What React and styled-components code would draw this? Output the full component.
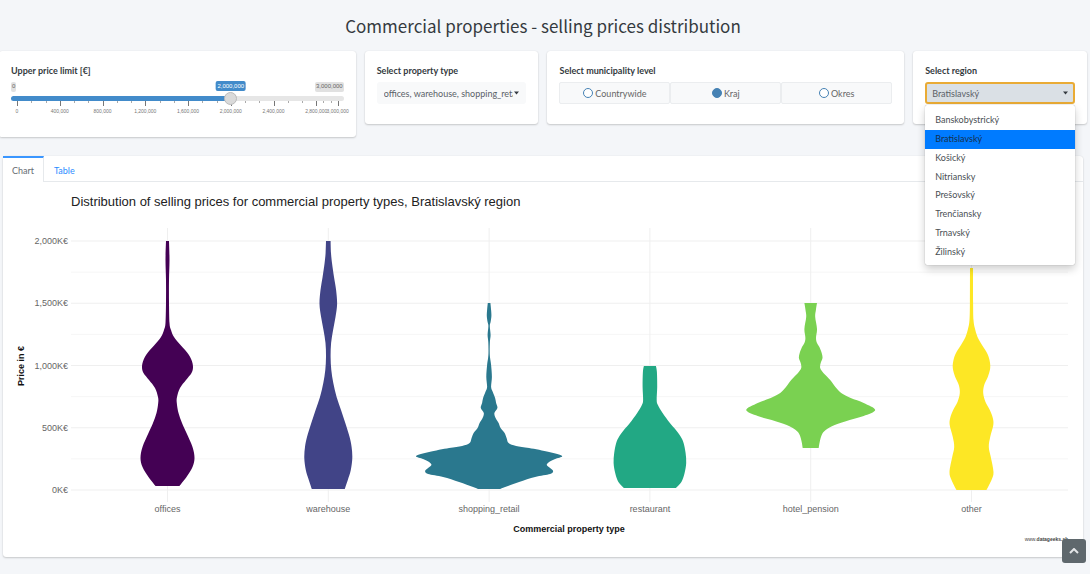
import React from "react";
import styled, { createGlobalStyle } from "styled-components";
import { useState } from "react";

const GlobalStyle = createGlobalStyle`
  * {
    box-sizing: border-box;
  }

  body {
    margin: 0;
    min-height: 100vh;
    overflow-x: hidden;
    background: #f4f6f9;
    color: #343a40;
    font-family: Lato, "Noto Sans", sans-serif;
    font-size: 9px;
  }

  button,
  select,
  input {
    margin: 0;
    font: inherit;
    color: inherit;
  }
`;

const Page = styled.main`
  padding-bottom: 16px;
`;

const PageTitle = styled.h1`
  margin: 0;
  padding: 11px 4px 10px 0;
  font-family: "Noto Sans CJK SC", "Noto Sans", sans-serif;
  font-size: 17px;
  font-weight: 400;
  line-height: 30px;
  text-align: center;
`;

const Filters = styled.section`
  display: grid;
  grid-template-columns: repeat(12, 1fr);
  column-gap: 9px;
  align-items: start;
  margin: 0 3px 19px -1px;
`;

const Card = styled.div`
  grid-column: span ${(props) => props.$span};
  min-width: 0;
  padding: 11px 12px 20px;
  background: #fff;
  border-radius: 3px;
  box-shadow: 0 0 1px rgba(0, 0, 0, 0.12), 0 1px 2px rgba(0, 0, 0, 0.18);
`;

const FieldLabel = styled.label`
  display: block;
  margin-bottom: 2px;
  font-weight: 700;
  line-height: 18px;
`;

const SliderHead = styled.div`
  position: relative;
  display: flex;
  justify-content: space-between;
  height: 10px;
`;

const SliderBadge = styled.span`
  padding: 0 1px;
  background: #e1e1e1;
  border-radius: 2px;
  color: #666;
  font-family: "Liberation Sans", Arial, sans-serif;
  font-size: 6px;
  line-height: 9px;
`;

const SliderValue = styled(SliderBadge)`
  position: absolute;
  top: -1px;
  transform: translateX(-50%);
  padding: 0 2px;
  background: #428bca;
  color: #fff;
  line-height: 10px;
`;

const Range = styled.input`
  display: block;
  position: relative;
  z-index: 1;
  width: 100%;
  height: 13px;
  appearance: none;
  background: transparent;

  &::-webkit-slider-runnable-track {
    height: 5px;
    border-radius: 3px;
    background: linear-gradient(
      to right,
      #428bca ${(props) => props.$filled}%,
      #e6e6e6 ${(props) => props.$filled}%
    );
  }

  &::-webkit-slider-thumb {
    appearance: none;
    width: 13px;
    height: 13px;
    margin-top: -4px;
    border: 1px solid #bbb;
    border-radius: 50%;
    background: #dadada;
  }
`;

const Scale = styled.div`
  display: flex;
  height: 16px;
  margin: -4px 6px 0;
`;

const ScaleStep = styled.div`
  flex: ${(props) => props.$size} 0 0;
  min-width: 0;
`;

const Marks = styled.div`
  display: grid;
  grid-template-columns: repeat(3, 1fr);
  height: 5px;
`;

const Mark = styled.i`
  height: ${(props) => (props.$major ? 5 : 2)}px;
  border-left: 1px solid ${(props) => (props.$major ? "#777" : "#aaa")};
`;

const ScaleLabel = styled.span`
  display: flex;
  justify-content: center;
  width: 0;
  color: #777;
  font-family: "Liberation Sans", Arial, sans-serif;
  font-size: 5px;
  line-height: 10px;
  white-space: nowrap;
`;

const SelectWrap = styled.div`
  position: relative;
`;

const Select = styled.select`
  display: block;
  width: 100%;
  height: 22px;
  padding: 0 13px 0 ${(props) => (props.$open ? 5 : 7)}px;
  appearance: none;
  border: ${(props) => (props.$open ? "2px solid #e9ab35" : "0")};
  border-radius: 3px;
  outline: 0;
  background: ${(props) => (props.$open ? "#dae0e5" : "#f8f9fa")};
  color: #5a6168;
`;

const Caret = styled.svg`
  position: absolute;
  top: 9px;
  right: 7px;
  width: 5px;
  height: 4px;
  pointer-events: none;
`;

const Menu = styled.ul`
  position: absolute;
  z-index: 10;
  top: 23px;
  left: 0;
  right: 0;
  display: grid;
  grid-auto-rows: 1fr;
  height: 160px;
  margin: 0;
  padding: 6px 0 4px;
  list-style: none;
  background: #fff;
  border-radius: 2px;
  box-shadow: 0 0 1px rgba(0, 0, 0, 0.4), 0 4px 8px rgba(0, 0, 0, 0.2);
`;

const MenuItem = styled.li`
  display: flex;
  align-items: center;
  padding: 0 10px;
  background: ${(props) => (props.$active ? "#007bff" : "transparent")};
  color: ${(props) => (props.$active ? "#16304d" : "#4a4f54")};
  line-height: 12px;
`;

const RadioGroup = styled.div`
  display: grid;
  grid-template-columns: repeat(3, 1fr);
`;

const RadioButton = styled.label`
  display: flex;
  align-items: center;
  justify-content: center;
  gap: 2px;
  height: 22px;
  border: 1px solid #ebedef;
  border-radius: 2px;
  background: #f8f9fa;
  color: #666;
`;

const Radio = styled.input`
  width: 10px;
  height: 10px;
  appearance: none;
  border: 1px solid #4682b4;
  border-radius: 50%;
  background: #fff;

  &:checked {
    background: #4682b4;
  }
`;

const Panel = styled.section`
  margin: 0 7px 0 3px;
  background: #fff;
  border-radius: 3px;
  box-shadow: 0 0 1px rgba(0, 0, 0, 0.12), 0 1px 2px rgba(0, 0, 0, 0.18);
`;

const Tabs = styled.div`
  display: flex;
  height: 26px;
  border-bottom: 1px solid #e6e9ec;
`;

const Tab = styled.button`
  height: 26px;
  padding: 0 ${(props) => (props.$active ? 9 : 10)}px;
  border: 0;
  border-top: 2px solid ${(props) => (props.$active ? "#3a96ff" : "transparent")};
  border-right: 1px solid ${(props) => (props.$active ? "#e6e9ec" : "transparent")};
  background: ${(props) => (props.$active ? "#fff" : "transparent")};
  color: ${(props) => (props.$active ? "#666c72" : "#2b8cff")};
`;

const Chart = styled.svg`
  display: block;
  width: 100%;
  font-family: "Liberation Sans", Arial, sans-serif;
`;

const TopButton = styled.button`
  position: fixed;
  right: 4px;
  bottom: 11px;
  display: grid;
  place-items: center;
  width: 24px;
  height: 24px;
  padding: 0;
  border: 0;
  border-radius: 3px;
  background: #5f686d;
  color: #e4e6e8;
`;

const MAX_PRICE = 3000000;
const STEPS = [0, 400000, 800000, 1200000, 1600000, 2000000, 2400000, 2800000];
const LEVELS = ["Countrywide", "Kraj", "Okres"];
const REGIONS = [
  "Banskobystrický",
  "Bratislavský",
  "Košický",
  "Nitriansky",
  "Prešovský",
  "Trenčiansky",
  "Trnavský",
  "Žilinský",
];

// each profile point is [height above the zero line, half width]
const VIOLINS = [
  {
    name: "offices",
    color: "#440154",
    profile: [
      [249, 1.5], [230, 2], [210, 1.5], [187, 1.5], [167, 2], [160, 3.5],
      [153, 6.5], [145, 13], [137, 20], [130, 24], [123, 25.5], [117, 24],
      [110, 18.5], [102, 12.5], [93, 9.5], [87, 9.3], [77, 11], [67, 14.5],
      [57, 19], [43, 25], [32, 27], [23, 25], [13, 19], [4, 12],
    ],
  },
  {
    name: "warehouse",
    color: "#414487",
    profile: [
      [249, 2.3], [237, 2.7], [227, 3.7], [213, 5.7], [200, 7.8], [186, 8.8],
      [173, 7.2], [160, 4.8], [147, 2.8], [133, 2.3], [120, 3], [107, 5],
      [93, 8.3], [80, 12.7], [67, 17], [53, 21.3], [43, 23.3], [32, 24],
      [20, 22.5], [10, 19.5], [1, 16.5],
    ],
  },
  {
    name: "shopping_retail",
    color: "#2a788e",
    profile: [
      [187, 1.3], [180, 2], [174, 2.3], [168, 1.5], [164, 0.7], [155, 1.5],
      [148, 0.8], [138, 0.6], [132, 1], [125, 2], [113, 2.8], [103, 2],
      [98, 3.7], [92, 6], [87, 7], [82, 8.3], [77, 5.3], [72, 6.5],
      [67, 9.5], [62, 11.5], [57, 15.5], [52, 17.5], [47, 19.5], [44, 27],
      [42, 40], [38, 60], [34, 73], [31, 66], [28, 60], [25, 57.7],
      [22, 61], [19, 64], [16, 61], [13, 46], [8, 30], [3, 16], [1, 11],
    ],
  },
  {
    name: "restaurant",
    color: "#22a884",
    profile: [
      [124, 6], [118, 7], [103, 7.3], [90, 6.8], [85, 8], [77, 12.7],
      [67, 20], [60, 26], [53, 31], [47, 33.7], [37, 35.7], [27, 36.3],
      [17, 34.7], [8, 31.5], [2, 26],
    ],
  },
  {
    name: "hotel_pension",
    color: "#7ad151",
    profile: [
      [187, 6.3], [180, 5.2], [173, 4.5], [161, 6.3], [152, 5.3], [147, 6.3],
      [143, 8.7], [137, 11], [132, 11.8], [127, 10], [122, 9.5], [117, 12.7],
      [110, 19.5], [103, 24.7], [97, 30.5], [92, 40], [87, 53], [80, 64.5],
      [74, 53], [70, 39], [65, 24], [60, 15], [55, 11], [48, 9], [42, 8],
    ],
  },
  {
    name: "other",
    color: "#fde725",
    profile: [
      [222, 1.5], [187, 1.6], [170, 2], [162, 3.3], [153, 6], [145, 10.5],
      [137, 15.5], [130, 18], [122, 18.7], [113, 16.3], [105, 12.7],
      [97, 11.7], [88, 14], [80, 18.3], [72, 21.3], [65, 21.8], [53, 18.7],
      [43, 17.3], [33, 19.3], [18, 22], [10, 20], [0, 15],
    ],
  },
];

const ZERO_Y = 308;
const PLOT_LEFT = 68;
const PLOT_RIGHT = 1065;
const centerOf = (index) => 164.5 + index * 160.8;
const yOf = (thousands) => ZERO_Y - (thousands * 249) / 2000;

// smooth curve through the points, the first one is already the pen position
const curve = (points) =>
  points
    .slice(0, -1)
    .map((p, i) => {
      const before = points[i - 1] || p;
      const next = points[i + 1];
      const after = points[i + 2] || next;
      const c1 = [p[0] + (next[0] - before[0]) / 6, p[1] + (next[1] - before[1]) / 6];
      const c2 = [next[0] - (after[0] - p[0]) / 6, next[1] - (after[1] - p[1]) / 6];
      return `C${c1} ${c2} ${next}`;
    })
    .join("");

const violinPath = (profile, cx) => {
  const right = profile.map(([h, w]) => [cx + w, ZERO_Y - h]);
  const left = profile.map(([h, w]) => [cx - w, ZERO_Y - h]).reverse();
  return `M${right[0]}${curve(right)}L${left[0]}${curve(left)}Z`;
};

const format = (value) => value.toLocaleString("en-US");

function PriceSlider() {
  const [price, setPrice] = useState(2000000);
  const share = price / MAX_PRICE;

  return (
    <Card $span={4}>
      <FieldLabel htmlFor="price">Upper price limit [€]</FieldLabel>
      <SliderHead>
        <SliderBadge>0</SliderBadge>
        <SliderBadge>{format(MAX_PRICE)}</SliderBadge>
        <SliderValue style={{ left: `calc(6px + (100% - 12px) * ${share})` }}>
          {format(price)}
        </SliderValue>
      </SliderHead>
      <Range
        id="price"
        type="range"
        min="0"
        max={MAX_PRICE}
        step="100000"
        value={price}
        $filled={share * 100}
        onChange={(e) => setPrice(Number(e.target.value))}
      />
      <Scale>
        {STEPS.map((step) => (
          <ScaleStep key={step} $size={Math.min(4, (MAX_PRICE - step) / 100000)}>
            <Marks>
              <Mark $major />
              <Mark />
              <Mark />
            </Marks>
            <ScaleLabel>{format(step)}</ScaleLabel>
          </ScaleStep>
        ))}
        <ScaleStep $size={0}>
          <Marks>
            <Mark $major />
          </Marks>
          <ScaleLabel>{format(MAX_PRICE)}</ScaleLabel>
        </ScaleStep>
      </Scale>
    </Card>
  );
}

function CaretIcon() {
  return (
    <Caret viewBox="0 0 5 4" aria-hidden="true">
      <path d="M0 0.5h5L2.5 3.5z" fill="#343a40" />
    </Caret>
  );
}

function ViolinChart() {
  return (
    <Chart viewBox="0 0 1080 375" role="img" aria-label="Selling prices by property type">
      {[0, 250, 500, 750, 1000, 1250, 1500, 1750, 2000].map((v) => (
        <line
          key={v}
          x1={PLOT_LEFT}
          x2={PLOT_RIGHT}
          y1={yOf(v)}
          y2={yOf(v)}
          stroke={v % 500 ? "#f6f6f6" : "#efefef"}
        />
      ))}
      {VIOLINS.map((violin, i) => (
        <g key={violin.name}>
          <line x1={centerOf(i)} x2={centerOf(i)} y1="46" y2="320" stroke="#efefef" />
          <path d={violinPath(violin.profile, centerOf(i))} fill={violin.color} />
          <text x={centerOf(i)} y="330" fontSize="9" fill="#666" textAnchor="middle">
            {violin.name}
          </text>
        </g>
      ))}
      {[0, 500, 1000, 1500, 2000].map((v) => (
        <text key={v} x="65" y={yOf(v) + 3} fontSize="9" fill="#666" textAnchor="end">
          {format(v)}K€
        </text>
      ))}
      <text x="68" y="24" fontSize="13" fill="#222">
        Distribution of selling prices for commercial property types, Bratislavský region
      </text>
      <text x="566" y="350" fontSize="9" fontWeight="700" fill="#111" textAnchor="middle">
        Commercial property type
      </text>
      <text
        transform="translate(21 184) rotate(-90)"
        fontSize="9"
        fontWeight="700"
        fill="#111"
        textAnchor="middle"
      >
        Price in €
      </text>
      <text x="1065" y="359" fontSize="5" fill="#444" textAnchor="end">
        www.<tspan fontWeight="700">datageeks.sk</tspan>
      </text>
    </Chart>
  );
}

function App() {
  const [level, setLevel] = useState("Kraj");
  const [region, setRegion] = useState("Bratislavský");
  const [tab, setTab] = useState("Chart");

  return (
    <Page>
      <GlobalStyle />
      <PageTitle>Commercial properties - selling prices distribution</PageTitle>
      <Filters>
        <PriceSlider />
        <Card $span={2}>
          <FieldLabel htmlFor="type">Select property type</FieldLabel>
          <SelectWrap>
            <Select id="type">
              <option>offices, warehouse, shopping_retail, restaurant</option>
            </Select>
            <CaretIcon />
          </SelectWrap>
        </Card>
        <Card $span={4}>
          <FieldLabel as="div" id="level">
            Select municipality level
          </FieldLabel>
          <RadioGroup role="radiogroup" aria-labelledby="level">
            {LEVELS.map((name) => (
              <RadioButton key={name}>
                <Radio
                  type="radio"
                  name="level"
                  checked={level === name}
                  onChange={() => setLevel(name)}
                />
                {name}
              </RadioButton>
            ))}
          </RadioGroup>
        </Card>
        <Card $span={2}>
          <FieldLabel htmlFor="region">Select region</FieldLabel>
          <SelectWrap>
            <Select
              id="region"
              $open
              value={region}
              onChange={(e) => setRegion(e.target.value)}
            >
              {REGIONS.map((name) => (
                <option key={name}>{name}</option>
              ))}
            </Select>
            <CaretIcon />
            <Menu role="listbox" aria-label="Select region">
              {REGIONS.map((name) => (
                <MenuItem
                  key={name}
                  role="option"
                  aria-selected={region === name}
                  $active={region === name}
                  onClick={() => setRegion(name)}
                >
                  {name}
                </MenuItem>
              ))}
            </Menu>
          </SelectWrap>
        </Card>
      </Filters>
      <Panel>
        <Tabs role="tablist">
          {["Chart", "Table"].map((name) => (
            <Tab
              key={name}
              role="tab"
              aria-selected={tab === name}
              $active={tab === name}
              onClick={() => setTab(name)}
            >
              {name}
            </Tab>
          ))}
        </Tabs>
        <ViolinChart />
      </Panel>
      <TopButton type="button" aria-label="Back to top">
        <svg width="10" height="6" viewBox="0 0 10 6" fill="none">
          <path d="M1 5l4-4 4 4" stroke="currentColor" strokeWidth="2" />
        </svg>
      </TopButton>
    </Page>
  );
}

export default App;
